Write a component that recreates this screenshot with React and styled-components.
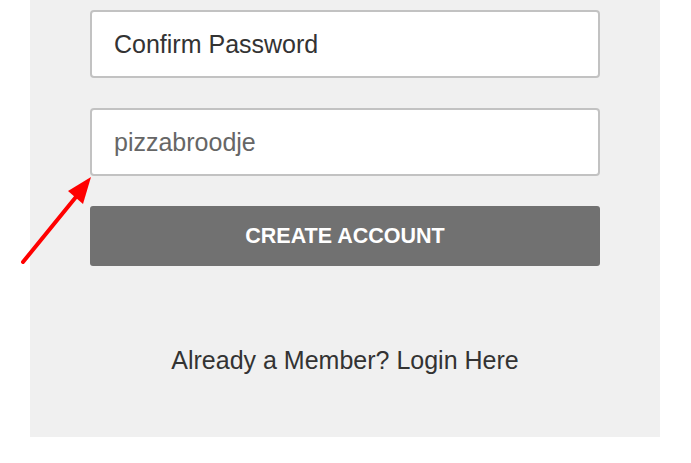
import React from "react";
import styled, { createGlobalStyle } from "styled-components";

const GlobalStyle = createGlobalStyle`
  body {
    margin: 0;
    background: #fff;
    font-family: "Liberation Sans", Arial, sans-serif;
  }
`;

const Page = styled.div`
  position: relative;
  width: 691px;
  height: 463px;
  overflow: hidden;
`;

const Panel = styled.form`
  margin-left: 30px;
  width: 630px;
  height: 437px;
  box-sizing: border-box;
  padding: 10px 60px 0;
  background: #f0f0f0;
  display: flex;
  flex-direction: column;
  gap: 30px;
`;

const Field = styled.input`
  box-sizing: border-box;
  width: 510px;
  height: 68px;
  padding: 0 22px;
  border: 2px solid #c2c2c2;
  border-radius: 4px;
  background: #fff;
  font-family: inherit;
  font-size: 25px;
  color: ${(p) => (p.$muted ? "#666" : "#333")};
  outline: none;
`;

const Submit = styled.button`
  width: 510px;
  height: 60px;
  border: none;
  border-radius: 3px;
  background: #717171;
  color: #fff;
  font-family: "Liberation Sans", Arial, sans-serif;
  font-weight: 700;
  font-size: 21.5px;
  text-transform: uppercase;
`;

const Footer = styled.p`
  margin: 50px 0 0;
  text-align: center;
  font-size: 25px;
  color: #333;
`;

const Arrow = styled.svg`
  position: absolute;
  left: 0;
  top: 0;
  pointer-events: none;
`;

export default function App() {
  return (
    <Page>
      <GlobalStyle />
      <Panel>
        <Field defaultValue="Confirm Password" />
        <Field $muted defaultValue="pizzabroodje" />
        <Submit type="button">Create Account</Submit>
        <Footer>Already a Member? Login Here</Footer>
      </Panel>
      <Arrow width="691" height="463" viewBox="0 0 691 463">
        <line x1="23" y1="262" x2="80" y2="192" stroke="#f00" strokeWidth="4" strokeLinecap="round" />
        <polygon points="91,177 68,191 83,204" fill="#f00" />
      </Arrow>
    </Page>
  );
}
